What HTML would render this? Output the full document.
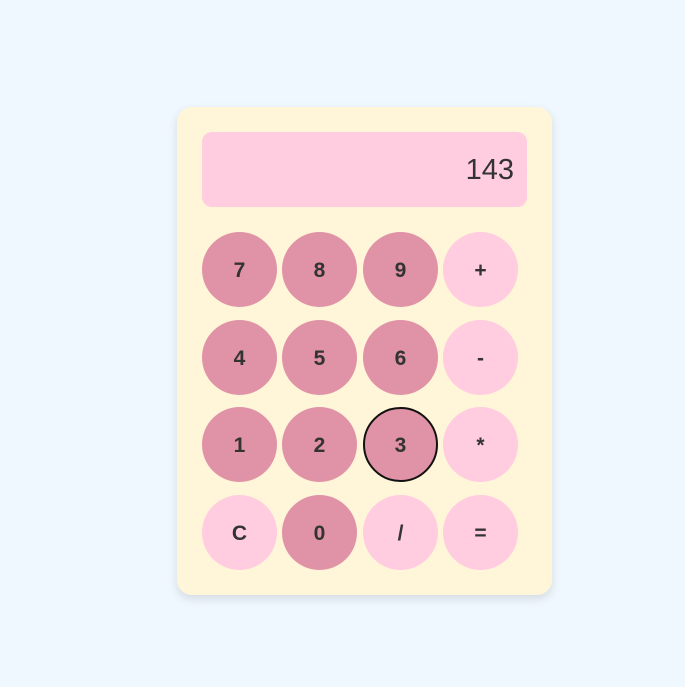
<!DOCTYPE html>
<html><head><style>
html,body{margin:0;padding:0;width:685px;height:687px;background:#f0f8ff;overflow:hidden;font-family:"Liberation Sans",Arial,sans-serif;}
.card{position:absolute;left:177px;top:107px;width:375px;height:488px;background:#fff5d8;border-radius:15px;box-shadow:0 4px 10px rgba(0,0,0,0.12);}
.disp{position:absolute;left:25px;top:25px;width:325px;height:75px;background:#ffcce0;border-radius:10px;box-sizing:border-box;padding-right:13px;text-align:right;line-height:77px;font-size:29px;color:#333;}
.b{position:absolute;width:75px;height:75px;border-radius:50%;background:#e093a6;color:#333;font-weight:bold;font-size:21px;text-align:center;line-height:77px;box-sizing:border-box;}
.l{background:#ffcce0;}
.f{border:2px solid #111;line-height:73px;}
</style></head><body>
<div class="card">
<div class="disp">143</div>
<div class="b" style="left:25px;top:125px">7</div>
<div class="b" style="left:105px;top:125px">8</div>
<div class="b" style="left:186px;top:125px">9</div>
<div class="b l" style="left:266px;top:125px">+</div>
<div class="b" style="left:25px;top:213px">4</div>
<div class="b" style="left:105px;top:213px">5</div>
<div class="b" style="left:186px;top:213px">6</div>
<div class="b l" style="left:266px;top:213px">-</div>
<div class="b" style="left:25px;top:300px">1</div>
<div class="b" style="left:105px;top:300px">2</div>
<div class="b f" style="left:186px;top:300px">3</div>
<div class="b l" style="left:266px;top:300px">*</div>
<div class="b l" style="left:25px;top:388px">C</div>
<div class="b" style="left:105px;top:388px">0</div>
<div class="b l" style="left:186px;top:388px">/</div>
<div class="b l" style="left:266px;top:388px">=</div>
</div>
</body></html>
